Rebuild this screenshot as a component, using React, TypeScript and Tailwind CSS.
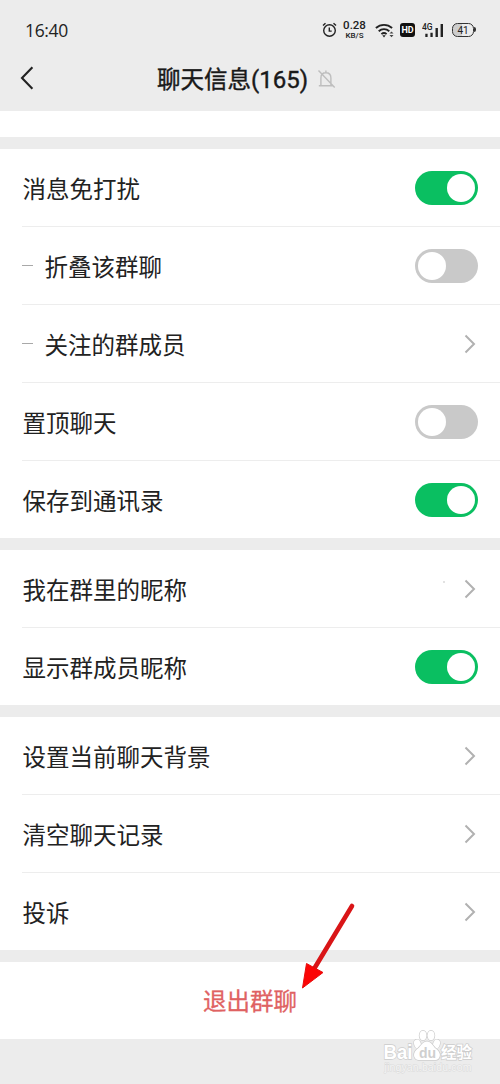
import type { ReactNode } from 'react';

function Toggle({ on }: { on: boolean }) {
  return (
    <button
      role="switch"
      aria-checked={on}
      className={
        on
          ? 'flex h-[34px] w-[63px] items-center justify-end rounded-full bg-[#0abf61] p-[3px]'
          : 'flex h-[34px] w-[63px] items-center justify-start rounded-full bg-[#c9c9c9] p-[3px]'
      }
    >
      <span className="size-7 rounded-full bg-white" />
    </button>
  );
}

function Chevron() {
  return (
    <svg className="mr-[2px] h-5 w-3" viewBox="0 0 12 20" fill="none" stroke="#b1b1b1" strokeWidth="2">
      <path d="M1.5 1.5 10 10 1.5 18.5" />
    </svg>
  );
}

function Row({ label, sub, last, children }: { label: string; sub?: boolean; last?: boolean; children: ReactNode }) {
  return (
    <div
      className={
        last
          ? 'ml-[22px] flex h-[77px] items-center pr-[22px]'
          : 'ml-[22px] flex h-[78px] items-center border-b border-[#ededed] pr-[22px]'
      }
    >
      {sub && <span className="mr-[11px] h-px w-[11px] bg-[#a9a9a9]" />}
      <span className="flex-1 pl-[0.5px] text-[23.5px] leading-8">{label}</span>
      {children}
    </div>
  );
}

function StatusBar() {
  return (
    <div className="flex h-[60px] items-center pr-[26px] pl-[25px] text-[#222]">
      <span className="flex-1 font-['Open_Sans',sans-serif] text-[17.5px] tracking-[-0.35px]">16:40</span>
      <svg className="h-4 w-[15px]" viewBox="0 0 15 16" fill="none" stroke="#222" strokeWidth="1.4">
        <circle cx="7.5" cy="8.5" r="5.8" />
        <path d="M7.3 5.5v3.6h2.4M1 3.6 3.5 1.3M14 3.6 11.5 1.3" />
      </svg>
      <span className="ml-[6px] flex w-[23px] flex-col items-center gap-[2px] font-['Roboto',sans-serif] font-medium whitespace-nowrap">
        <span className="text-[11.5px] leading-[9px]">0.28</span>
        <span className="text-[8px] leading-[7px]">KB/S</span>
      </span>
      <svg className="ml-[9px] h-4 w-[19px]" viewBox="0 0 19 16" fill="none" stroke="#222" strokeWidth="1.9">
        <path d="M.9 6c4.7-4.2 11.5-4.2 16.2 0M3.7 9.2c3.1-2.8 7.5-2.8 10.6 0M6.4 12.1c1.5-1.3 3.7-1.3 5.2 0" />
        <path d="m7.3 13.2 1.7 2.2 1.7-2.2z" fill="#222" stroke="none" />
        <path d="m14.5 11.6 2-2.2 2 2.2zM14.5 13l2 2.2 2-2.2z" fill="#444" stroke="none" />
      </svg>
      <span className="ml-[6px] flex h-[14px] w-[15px] items-center justify-center rounded-[3px] bg-[#111] font-['Roboto',sans-serif] text-[9px] leading-none font-bold tracking-[-0.2px] text-white">
        HD
      </span>
      <svg className="ml-[7px] h-4 w-[22px]" viewBox="0 0 22 16" fill="#222">
        <text x="0" y="8" fontFamily="Roboto, sans-serif" fontSize="8.5" fontWeight="500">4G</text>
        <path d="M3.3 11.7h2.3V15H3.3zM8.4 10.7h2.3V15H8.4zM13.5 6h2.4v9h-2.4zM18.6 2H21v13h-2.4z" />
      </svg>
      <span className="relative ml-[8px] flex h-[14px] w-[22px] items-center justify-center rounded-[5.5px] border-[1.5px] border-[#333] bg-[linear-gradient(90deg,#cdcdcd_45%,#ececec_45%)] pt-px font-['Roboto',sans-serif] text-[10px] leading-none">
        41
        <span className="absolute top-[3px] -right-[3px] h-[5px] w-[2px] rounded-r-sm bg-[#333]" />
      </span>
    </div>
  );
}

function Header() {
  return (
    <header className="h-[111px] bg-[#ececec]">
      <StatusBar />
      <div className="flex h-[50px] items-start pl-[20px]">
        <svg className="mt-[6px] h-6 w-[14px]" viewBox="0 0 14 24" fill="none" stroke="#222" strokeWidth="2.1">
          <path d="M12.4 1.2 2 12l10.4 10.8" />
        </svg>
        <h1 className="ml-[123px] pt-[2px] text-[23.5px] leading-8 font-normal whitespace-nowrap text-[#191919] [-webkit-text-stroke:0.4px_#191919]">
          聊天信息<span className="font-['Roboto',sans-serif] text-[24px]">(165)</span>
        </h1>
        <svg className="mt-[9px] ml-[9px] h-[20px] w-[19px]" viewBox="0 0 19 20" fill="none" stroke="#bebebe" strokeWidth="1.4">
          <path d="M1.8 16.8h13.8M3.9 16.5V9c0-3 1.9-5.2 5-5.2s5 2.2 5 5.2v7.5M8.9 1.4v2.4M1.5 1.5l16.2 17" />
        </svg>
      </div>
    </header>
  );
}

function Watermark() {
  return (
    <svg
      className="absolute top-[1028px] left-[380px] h-[48px] w-[96px]"
      viewBox="0 0 96 48"
      fill="#fff"
      stroke="#cbcbcb"
      strokeWidth="1.4"
      paintOrder="stroke"
    >
      <ellipse cx="37.5" cy="16" rx="3.3" ry="4.5" transform="rotate(-20 37.5 16)" />
      <ellipse cx="43" cy="7.5" rx="3.5" ry="4.8" />
      <ellipse cx="51" cy="7.5" rx="3.5" ry="4.8" />
      <ellipse cx="56.5" cy="16" rx="3.3" ry="4.5" transform="rotate(20 56.5 16)" />
      <path d="M47 13.5c-5 0-6.7 6-10.3 8-4.8 4.5-2.5 10.5 2 10.5h16.6c4.6 0 6.8-6.2 1.6-10.5-3.6-2-5-8-9.9-8Z" />
      <g fontFamily="Liberation Sans, sans-serif" fontWeight="700">
        <text x="3.5" y="30.5" fontSize="21" textLength="29" lengthAdjust="spacingAndGlyphs">Bai</text>
        <text x="39" y="29.5" fontSize="14" fill="#cfcfcf" stroke="none">du</text>
      </g>
      <text x="61" y="29.5" fontFamily="Noto Sans CJK SC, sans-serif" fontSize="15.5" fontWeight="700">经验</text>
      <text
        x="4.5"
        y="42.5"
        fontFamily="Liberation Sans, sans-serif"
        fontSize="10.5"
        strokeWidth="1"
        fill="#f4f4f4"
        stroke="#dadada"
        textLength="87"
      >
        jingyan.baidu.com
      </text>
    </svg>
  );
}

export default function App() {
  return (
    <main className="relative h-[1084px] w-[500px] overflow-hidden bg-[#ececec] font-['Noto_Sans_CJK_SC',sans-serif] text-[#222]">
      <Header />
      <div className="flex flex-col gap-3">
        <div className="h-[26px] bg-white" />
        <section className="h-[389px] bg-white">
          <Row label="消息免打扰"><Toggle on /></Row>
          <Row label="折叠该群聊" sub><Toggle on={false} /></Row>
          <Row label="关注的群成员" sub><Chevron /></Row>
          <Row label="置顶聊天"><Toggle on={false} /></Row>
          <Row label="保存到通讯录" last><Toggle on /></Row>
        </section>
        <section className="h-[155px] bg-white">
          <Row label="我在群里的昵称">
            <span className="mr-[19px] mb-[13px] size-[2px] rounded-full bg-[#d8d8d8]" />
            <Chevron />
          </Row>
          <Row label="显示群成员昵称" last><Toggle on /></Row>
        </section>
        <section className="h-[233px] bg-white">
          <Row label="设置当前聊天背景"><Chevron /></Row>
          <Row label="清空聊天记录"><Chevron /></Row>
          <Row label="投诉" last><Chevron /></Row>
        </section>
        <button className="flex h-[77px] items-center justify-center bg-white pt-[1px] text-[23.5px] text-[#df6262] [-webkit-text-stroke:0.3px_#df6262]">
          退出群聊
        </button>
      </div>
      <svg className="absolute top-[898px] left-[296px] h-[96px] w-[64px]" viewBox="0 0 64 96" fill="none">
        <path d="M56 8 18 71" stroke="#d91517" strokeWidth="4.6" strokeLinecap="round" />
        <path d="M6.5 90 10.5 65.5 27 74.5Z" fill="#fb0505" stroke="#e80c0c" strokeWidth="1" />
      </svg>
      <Watermark />
    </main>
  );
}
